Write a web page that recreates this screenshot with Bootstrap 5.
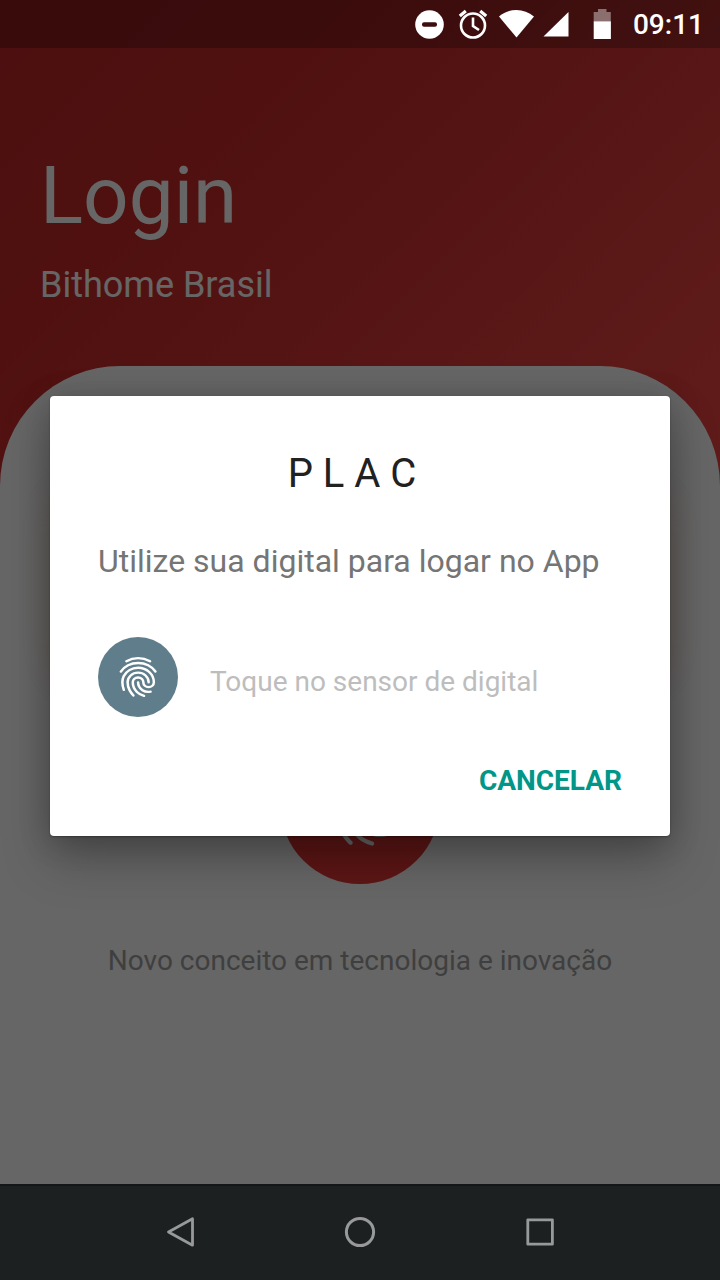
<!DOCTYPE html>
<html lang="pt-BR">
<head>
<meta charset="utf-8">
<meta name="viewport" content="width=device-width, initial-scale=1">
<title>Login - Bithome Brasil</title>
<link href="https://cdn.jsdelivr.net/npm/bootstrap@5.3.0/dist/css/bootstrap.min.css" rel="stylesheet">
<style>
  body { font-family: Roboto, "Noto Sans", sans-serif; background: linear-gradient(135deg, #c02526 0%, #c82a2a 18%, #ea4441 54%, #ef5350 100%) #c62828; }
  .status-bar { height: 48px; padding-right: 16px; color: #fff; background: rgba(0, 0, 0, .7); }
  .status-bar time { font-size: 28px; line-height: 48px; font-weight: 500; padding-top: 2px; }
  .hero { padding: 102px 40px 60px; color: #fff; }
  .hero h1 { font-size: 80px; line-height: 92px; font-weight: 400; }
  .hero p { font-size: 36px; line-height: 42px; margin-top: 22px; }
  .sheet { background: #fff; border-radius: 120px 120px 0 0; padding: 120px 60px 60px; }
  .login-card { height: 180px; border-radius: 20px; background: #fff; box-shadow: 0 10px 40px rgba(225, 95, 27, .3); }
  .touch-btn { width: 160px; height: 160px; margin-top: 58px; background: #e53935; color: #fff; }
  .slogan { font-size: 28px; line-height: 34px; margin-top: 60px; color: #9e9e9e; }
  .dim { background: rgba(0, 0, 0, .6); padding: 0 50px; }
  .dialog { border-radius: 4px; padding: 50px 48px 35px; background: #fff; box-shadow: 0 24px 48px rgba(0, 0, 0, .25), 0 4px 32px rgba(0, 0, 0, .2), 0 1px 2px rgba(0, 0, 0, .3); }
  .dialog h2 { font-size: 40px; line-height: 56px; font-weight: 400; color: #212121; }
  .dialog-text { font-size: 32px; line-height: 48px; margin-top: 35px; color: #757575; }
  .sensor { margin-top: 52px; gap: 32px; }
  .sensor-icon { width: 80px; height: 80px; background: #607d8b; }
  .sensor-text { font-size: 28px; line-height: 32px; padding-top: 10px; color: #bdbdbd; }
  .cancel { font-size: 28px; line-height: 40px; font-weight: 700; margin-top: 44px; color: #009688; }
  .nav-bar { height: 96px; background: #1d2021; border-top: 2px solid #141617; color: #97999a; }
  .nav-bar button { width: 25%; }
</style>
</head>
<body class="d-flex flex-column min-vh-100">
  <header class="status-bar d-flex align-items-center justify-content-end">
    <svg width="208" height="48" viewBox="0 0 208 48" fill="#fff" aria-hidden="true">
      <circle cx="20.500" cy="24.500" r="14.300"/>
      <rect x="13" y="22.300" width="15" height="4.400" rx="2" fill="#3e0d0e"/>
      <g fill="none" stroke="#fff" stroke-width="2.600">
        <circle cx="64" cy="25.500" r="12"/>
        <path d="M64 17.500v8.500l6 4"/>
        <path d="M50.800 16l6-5M77.200 16l-6-5" stroke-width="3.200"/>
      </g>
      <path d="M90 16.500C100 7.800 115 7.800 125 16.500L107.500 37.500Z"/>
      <path d="M134.500 36.500L159.500 12V36.500Z"/>
      <path d="M184.700 21.500V12h4.300V9h8.500v3h4.300v9.500z" opacity=".4"/>
      <path d="M184.700 21.300h17.200V39h-17.200z"/>
    </svg>
    <time class="ms-3" datetime="09:11">09:11</time>
  </header>

  <main class="position-relative d-flex flex-column flex-grow-1">
    <div class="hero">
      <h1 class="m-0">Login</h1>
      <p class="mb-0">Bithome Brasil</p>
    </div>
    <div class="sheet d-flex flex-column align-items-center flex-grow-1">
      <div class="login-card w-100"></div>
      <button type="button" class="touch-btn btn rounded-circle p-0 flex-shrink-0" aria-label="Entrar com digital">
        <svg width="100" height="100" viewBox="0 0 24 24" fill="currentColor" aria-hidden="true"><path d="M17.810 4.470c-.08 0-.16-.02-.23-.06C15.660 3.420 14 3 12.010 3c-1.980 0-3.860.47-5.570 1.410-.24.13-.54.04-.68-.2-.13-.24-.04-.55.2-.68C7.820 2.520 9.860 2 12.010 2c2.130 0 3.990.47 6.030 1.520.25.13.34.43.21.67-.09.18-.26.28-.44.28zM9.750 21.790c-.13 0-.26-.05-.35-.15-.87-.87-1.340-1.430-2.010-2.640-.69-1.230-1.050-2.730-1.050-4.340 0-2.970 2.540-5.390 5.660-5.390s5.660 2.420 5.660 5.390c0 .28-.22.5-.5.5s-.5-.22-.5-.5c0-2.420-2.090-4.390-4.660-4.390-2.570 0-4.660 1.970-4.660 4.390 0 1.440.32 2.770.93 3.850.64 1.150 1.080 1.640 1.850 2.420.19.2.19.51 0 .71-.11.1-.24.15-.37.15zm7.170-1.850c-1.190 0-2.240-.3-3.100-.89-1.490-1.010-2.380-2.650-2.380-4.390 0-.28.22-.5.5-.5s.5.22.5.5c0 1.410.72 2.740 1.940 3.560.71.48 1.540.71 2.540.71.24 0 .64-.03 1.040-.1.27-.05.53.13.58.41.05.27-.13.53-.41.58-.57.11-1.070.12-1.210.12zM14.910 22c-.04 0-.09-.01-.13-.02-1.590-.44-2.630-1.030-3.720-2.100-1.400-1.390-2.170-3.240-2.170-5.220 0-1.620 1.380-2.940 3.080-2.940 1.700 0 3.080 1.320 3.080 2.940 0 1.070.93 1.940 2.080 1.940s2.080-.87 2.080-1.940c0-3.770-3.250-6.830-7.250-6.830-2.840 0-5.440 1.580-6.610 4.030-.39.81-.59 1.760-.59 2.800 0 .78.07 2.010.67 3.610.1.26-.03.55-.29.64-.26.1-.55-.04-.64-.29-.49-1.310-.73-2.610-.73-3.960 0-1.200.23-2.290.68-3.240 1.330-2.790 4.280-4.600 7.510-4.600 4.550 0 8.250 3.510 8.250 7.830 0 1.620-1.380 2.940-3.080 2.940s-3.080-1.320-3.080-2.940c0-1.070-.93-1.940-2.080-1.940s-2.080.87-2.080 1.940c0 1.710.66 3.310 1.870 4.510.95.94 1.860 1.460 3.270 1.850.27.07.42.35.35.61-.05.23-.26.38-.47.38z"/></svg>
      </button>
      <p class="slogan mb-0 text-center">Novo conceito em tecnologia e inovação</p>
    </div>

    <div class="dim position-absolute top-0 start-0 w-100 h-100 d-flex align-items-center">
      <section class="dialog w-100" role="dialog" aria-modal="true" aria-labelledby="dialog-title">
        <h2 id="dialog-title" class="m-0 pe-3 text-center">P L A C</h2>
        <p class="dialog-text mb-0">Utilize sua digital para logar no App</p>
        <div class="sensor d-flex align-items-center">
          <span class="sensor-icon rounded-circle d-flex align-items-center justify-content-center flex-shrink-0">
            <svg width="50" height="46" viewBox="-49 -50.200 31.500 31.500" preserveAspectRatio="none" fill="none" stroke="#fff" stroke-width="1.600" stroke-linecap="round" aria-hidden="true">
              <path d="M-25.360-24.410c-.57.11-1.130.14-1.450.14-1.300 0-2.530-.34-3.620-1.120-1.680-1.200-2.770-3.170-2.770-5.390"/>
              <path d="M-36.140-21.780c-1-1.190-1.570-1.920-2.360-3.500-.83-1.660-1.310-3.490-1.310-5.490 0-3.660 2.970-6.630 6.630-6.630s6.630 2.970 6.630 6.630"/>
              <path d="M-42.190-25.680c-.76-2.140-.9-3.870-.9-5.130 0-1.460.25-2.850.81-4.100 1.560-3.450 5.030-5.850 9.070-5.850 5.490 0 9.950 4.450 9.950 9.950 0 1.830-1.480 3.320-3.320 3.320s-3.320-1.490-3.320-3.320-1.480-3.320-3.320-3.320-3.320 1.490-3.320 3.320c0 2.570.99 4.890 2.610 6.590 1.220 1.290 2.430 2.100 4.480 2.690"/>
              <path d="M-44.060-38.170c1.190-1.770 2.670-3.240 4.560-4.270 1.880-1.030 4.040-1.610 6.340-1.610 2.290 0 4.440.58 6.320 1.600s3.360 2.480 4.550 4.240"/>
              <path d="M-25.640-45.300c-2.270-1.310-4.710-2.070-7.560-2.070s-5.230.78-7.340 2.070"/>
            </svg>
          </span>
          <span class="sensor-text">Toque no sensor de digital</span>
        </div>
        <div class="text-end">
          <button type="button" class="cancel btn border-0 p-0">CANCELAR</button>
        </div>
      </section>
    </div>
  </main>

  <nav class="nav-bar d-flex justify-content-center align-items-center" aria-label="Sistema">
    <button type="button" class="btn border-0 p-0" aria-label="Voltar">
      <svg width="36" height="36" viewBox="0 0 36 36" fill="none" stroke="#97999a" stroke-width="2.800" stroke-linejoin="round"><path d="M30.500 3.800V30.200L6.500 17z"/></svg>
    </button>
    <button type="button" class="btn border-0 p-0" aria-label="Início">
      <svg width="36" height="36" viewBox="0 0 36 36" fill="none" stroke="#97999a" stroke-width="3"><circle cx="18" cy="17" r="13.600"/></svg>
    </button>
    <button type="button" class="btn border-0 p-0" aria-label="Recentes">
      <svg width="36" height="36" viewBox="0 0 36 36" fill="none" stroke="#97999a" stroke-width="2.800" stroke-linejoin="round"><path d="M5.800 4.800h24.600v24.400H5.800z"/></svg>
    </button>
  </nav>
<script src="https://cdn.jsdelivr.net/npm/bootstrap@5.3.0/dist/js/bootstrap.bundle.min.js"></script>
</body>
</html>
